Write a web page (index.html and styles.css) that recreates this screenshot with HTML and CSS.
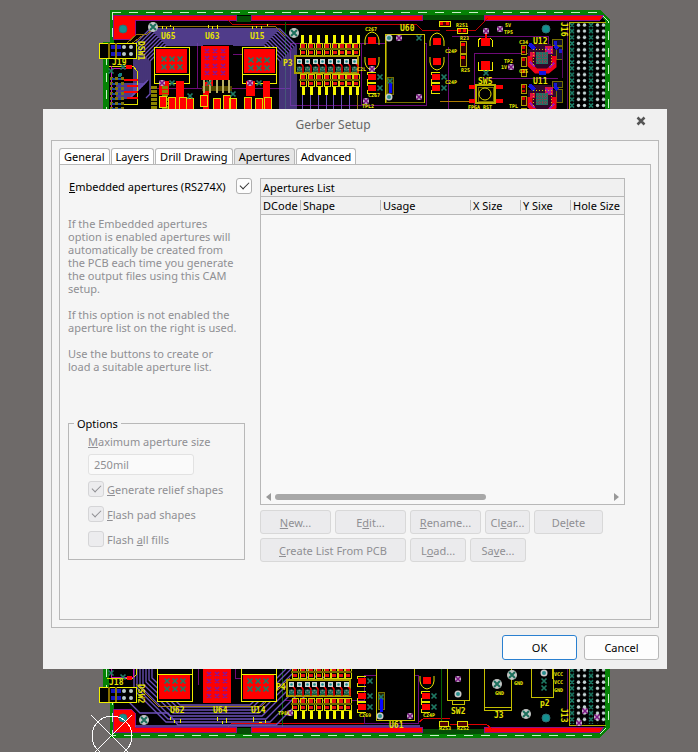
FILE: index.html
```html
<!DOCTYPE html>
<html lang="en">
<head>
<meta charset="utf-8">
<meta name="viewport" content="width=device-width, initial-scale=1">
<title>Gerber Setup</title>
<link rel="stylesheet" href="styles.css">
</head>
<body>
<svg class="board" viewBox="0 0 698 752" width="698" height="752" shape-rendering="crispEdges" aria-hidden="true">
  <defs>
    <pattern id="holes" x="569" y="22" width="38" height="12.4" patternUnits="userSpaceOnUse">
      <path d="M1 1l4 4M5 1l-4 4M1 7l4 4M5 7l-4 4M20 1l4 4M24 1l-4 4M20 7l4 4M24 7l-4 4" stroke="#1b8069" stroke-width="1.6" shape-rendering="auto"/>
      <g fill="#c4d4d4" shape-rendering="auto">
        <circle cx="9.500" cy="3" r="1.700"/><circle cx="15.500" cy="3" r="1.700"/><circle cx="9.500" cy="9" r="1.700"/><circle cx="15.500" cy="9" r="1.700"/>
        <circle cx="28.500" cy="3" r="1.700"/><circle cx="34.500" cy="3" r="1.700"/><circle cx="28.500" cy="9" r="1.700"/><circle cx="34.500" cy="9" r="1.700"/>
      </g>
    </pattern>
    <g id="via"><circle r="5" fill="#c3c7c5" shape-rendering="auto"/><path d="M-3-3L3 3M3-3L-3 3" stroke="#1b6f5c" stroke-width="2" shape-rendering="auto"/></g>
    <g id="pin" shape-rendering="auto"><circle r="3.500" fill="#c9c9c9"/><circle r="2" fill="#2a8f8f"/></g>
    <g id="xt"><path d="M-2.500-2.500L2.500 2.500M2.500-2.500L-2.500 2.500" stroke="#1f7a64" stroke-width="1.700" shape-rendering="auto"/></g>
    <g id="xp" shape-rendering="auto"><circle r="3" fill="#c9b6cc"/><path d="M-2.500-2.500L2.500 2.500M2.500-2.500L-2.500 2.500" stroke="#7c1584" stroke-width="1.500"/></g>
    <g id="x6">
      <use href="#xt" x="8" y="10"/><use href="#xt" x="16" y="10"/><use href="#xt" x="24" y="10"/>
      <use href="#xt" x="8" y="18"/><use href="#xt" x="16" y="18"/><use href="#xt" x="24" y="18"/>
    </g>
    <g id="x12" stroke="#86159a" stroke-width="1.700" fill="none" shape-rendering="auto">
      <path id="x3" d="M4 4l4 4m0-4l-4 4M12 4l4 4m0-4l-4 4M20 4l4 4m0-4l-4 4"/>
      <use href="#x3" y="7"/><use href="#x3" y="15"/><use href="#x3" y="22"/>
    </g>
    <g id="conn" shape-rendering="auto">
      <path d="M4 5l4 5v7" stroke="#e00" stroke-width="1.500" fill="none"/>
      <rect x="2" y="3" width="5" height="5" fill="#d0d6d4"/><circle cx="4.500" cy="5.500" r="1.300" fill="#168a8a"/>
      <circle cx="4.500" cy="13" r="2.500" fill="#78897f"/><path d="M2 11l5 5m0-5l-5 5" stroke="#156a53" stroke-width="1.500"/>
    </g>
    <g id="res">
      <path d="M1 0h6v12H1z" stroke="#d8d800" fill="#000"/><path d="M2 1h4v4H2zM2 8h4v3H2z" fill="#e01010"/><path d="M0 6h8" stroke="#6c6600" stroke-width="2"/>
    </g>
    <g id="cap"><path d="M-5-3H3V3H-5z" fill="#f00"/><path d="M-6-2v-3H3M-6 2v3H3" stroke="#e6e600" fill="none"/><use href="#xt" x="7" y="0"/></g>
    <g id="capv"><path d="M-4-3H4V4H-4z" fill="#f00"/><path d="M-7 5V0Q-6-7 0-8Q6-7 7 0V5" stroke="#e6e600" fill="none" shape-rendering="auto"/></g>
    <g id="qfn">
      <path d="M-9-14H9V-9H14V9H9V14H-9V9H-14V-9H-9z" fill="#30082a"/>
      <path d="M-12-2V7L-6 13H6L12 8V-2" fill="none" stroke="#f00018" stroke-width="5" shape-rendering="auto"/>
      <path d="M3-12h8v8H3zM-12-6h5v5h-5z" fill="#e01040"/>
      <path d="M4-10l6 6M10-10l-6 6M-12 4l5 5M7 10l5-5" stroke="#a014a8" stroke-width="2"/>
      <path d="M-13-14l6 5M-3 15h7M13-12l3 3" stroke="#1212e0" stroke-width="4"/>
      <path d="M-6-6H6V6H-6z" fill="#266f63"/><path d="M-6-3H6M-6 0H6M-6 3H6M-3-6V6M0-6V6M3-6V6" stroke="#8d3a4d" stroke-dasharray="1 1"/>
      <path d="M-9-9V9M9-9V9M-9-9H9" stroke="#d4c400" stroke-dasharray="1 2"/>
    </g>
    <g id="sideparts">
      <path d="M0 0h5v9H0zM0 12h5v9H0zM0 24h5v7H0z" fill="#280000" stroke="#a8a000"/>
      <path d="M1 1h3v3H1zM1 6h3v2H1zM1 13h3v3H1zM1 25h3v3H1z" fill="#d10000"/>
    </g>
    <g id="header">
      <path d="M0 0h37v15H0z" fill="#000" stroke="#f0f000"/>
      <path d="M12 2h4v4h-4zM18 2h4v4h-4zM12 9h4v4h-4zM18 9h4v4h-4z" fill="#1515c0"/>
      <path d="M10 0v15M17 0v15" stroke="#877000" stroke-width="2"/>
      <g fill="#b9c9c9" shape-rendering="auto"><circle cx="25" cy="4" r="2"/><circle cx="32" cy="4" r="2"/><circle cx="25" cy="11" r="2"/><circle cx="32" cy="11" r="2"/></g>
    </g>
  </defs>

  <!-- board outline -->
  <path d="M110 10H600L610 20V727L600 738H110V703H103V42H110z" fill="#058105"/>
  <path d="M114 15H599L605 21V726L599 733H114V699H109V46H114z" fill="#000"/>
  <path d="M112 12H599L608 21V726L599 735H112V701H106V44H112z" fill="none" stroke="#c8f0c8" stroke-dasharray="9 8"/>

  <!-- upper power planes and traces -->
  <path d="M236 16h15v6h-15zM422 15h62v5h-62z" fill="#064d06"/>
  <path d="M113 15H236V20H135V36L132 39H113zM251 15H422V20H251zM484 15H604L600 20H484z" fill="#f00" stroke="#8a0f8a"/>
  <path d="M228 20l4 4H416l6 6h18M488 18l-12 12h-30" fill="none" stroke="#c00000"/>
  <path d="M197 43v45M290 43v62M474 53v56M448 47v62M361 43h65v62h-65zM231 54h18M290 43h71M452 36h96v10M474 53h55M484 78h74M150 88h140M290 105h136" fill="none" stroke="#6d0b78"/>
  <path d="M285 22v87" stroke="#056305"/>
  <g fill="none" stroke="#6b50b8" shape-rendering="auto" stroke-width="1.300">
    <path d="M116 98H130L134 94V45L150 29H280L296 45V109"/>
    <path d="M116 96H132L136 92V47L152 31H278L294 47V109"/>
    <path d="M116 94H134L138 90V49L154 33H276L292 49V109"/>
    <path d="M116 92H136L140 88V51L156 35H274L290 51V109"/>
    <path d="M116 90H138L142 86V53L158 37H272L288 53V109"/>
    <path d="M116 88H140L144 84V55L160 39H270L286 55V109"/>
    <path d="M116 86H142L146 82V57L162 41H268L284 57V109"/>
    <path d="M116 84H144L148 80V59L164 43H266L282 59V109"/>
    <path d="M146 98L150 94V61L166 45H264L280 61V109"/>
  </g>
  <path d="M302 92v17M310 92v17M318 92v17M326 92v17M333 92v17M341 92v17M349 92v17" stroke="#6b50b8"/>
  <path d="M127 43l10-9h10l10-8h118l10 10M357 90v19M130 45l13-10" fill="none" stroke="#93750c"/>
  <path d="M203 45h30v35h-30z" fill="#000"/>

  <!-- lower power planes and traces -->
  <path d="M236 728h15v6h-15zM422 729h62v5h-62z" fill="#064d06"/>
  <path d="M113 709H131L135 713V727H236V732H113zM251 727H422V732H251zM484 727H604L600 732H484z" fill="#f00" stroke="#8a0f8a"/>
  <path d="M228 727l4-4H418l6-5h26M450 724h36l6 5" fill="none" stroke="#e00000"/>
  <path d="M198 669v16M235 669v9h20M364 717v6h54V675h-54v25h-80" fill="none" stroke="#6d0b78"/>
  <path d="M282 669v58M441 669v60M615 669" stroke="#056305"/>
  <g fill="none" stroke="#6b50b8" shape-rendering="auto" stroke-width="1.300">
    <path d="M128 701l12 12h28l10 12H276L340 661"/>
    <path d="M134 669V690L166 722H270L323 669"/>
    <path d="M137 669V688L168 719H266L316 669"/>
    <path d="M140 669V686L170 716H262L309 669"/>
    <path d="M143 669V684L173 713H259L303 669"/>
    <path d="M146 669V682L175 710H256L297 669"/>
    <path d="M149 669V680L177 707H253L291 669"/>
    <path d="M152 669V678L180 705H250L286 669"/>
    <path d="M135 726H420"/>
  </g>
  <path d="M136 684l22 22H262L290 678" fill="none" stroke="#a87f14"/>

  <!-- upper regulators -->
  <path d="M154 47h35v36h-35zM242 47h34v36h-34z" fill="#000" stroke="#f0f000"/>
  <path d="M154 74h35M242 74h34" stroke="#f0f000"/>
  <path d="M156 49h31v24h-31zM201 46h28v34h-28zM244 49h31v24h-31z" fill="#f00"/>
  <use href="#x6" x="156" y="49"/><use href="#x6" x="243" y="50"/><use href="#x12" x="201" y="45"/>
  <path d="M159 81h10v14h-10zM176 81h8v28h-8zM203 82h6v27h-6zM210 80h3v6h-3zM246 81h9v15h-9zM263 81h7v28h-7z" fill="#f00"/>
  <path d="M202 86h30v5h-30z" fill="#524700"/><path d="M204 80v13M210 80v13M217 80v13M223 80v13M229 80v13" stroke="#b9b060" stroke-width="2"/>
  <path d="M154 86v23M165 86v23" stroke="#8b8300" stroke-width="6" stroke-dasharray="3 1"/>
  <path d="M159 96h7v11h-7zM168 97h7v12h-7zM179 97h7v12h-7zM186 98h7v11h-7zM200 95h7v11h-7zM213 98h7v11h-7zM223 95h7v14h-7zM229 98h7v11h-7zM244 97h7v12h-7zM255 98h7v11h-7zM264 97h7v12h-7z" fill="#f00" stroke="#dcdc00"/>
  <use href="#xp" x="162" y="83"/><use href="#xt" x="172" y="83"/><use href="#xp" x="250" y="83"/><use href="#xt" x="259" y="83"/><use href="#xt" x="209" y="83"/><use href="#xt" x="190" y="96"/><use href="#xt" x="233" y="94"/>

  <!-- left connectors -->
  <use href="#header" x="99" y="43"/>
  <use href="#header" x="99" y="687"/>
  <path d="M109 66h24l4 5v33h-24" fill="none" stroke="#e0e000"/><path d="M111 66v43M112 68h19" stroke="#c216b4"/>
  <path d="M111 77v32M116 77v32M122 77v32" stroke="#80770c" stroke-width="3" stroke-dasharray="3 2"/>
  <path d="M113 78v31M119 78v31" stroke="#1647a8" stroke-width="3" stroke-dasharray="2 3"/>
  <path d="M124 80h14M127 86h11M124 92h14M127 98h11" stroke="#f00" stroke-width="2"/>
  <use href="#xt" x="111" y="71"/><use href="#xt" x="123" y="67"/><circle cx="120" cy="75" r="2" fill="#148080"/>
  <path d="M126 65h6v4h-6z" fill="#f00"/>
  <path d="M107 678h26l3-3v-6" fill="none" stroke="#e0e000"/><path d="M111 669v8h22v-8" stroke="#c216b4" fill="none"/><path d="M127 676h5v4h-5z" fill="#f00"/><use href="#xt" x="123" y="677"/><use href="#xt" x="111" y="673"/>

  <!-- P3 block -->
  <path d="M302 35v8M310 35v8M318 35v8M326 35v8M334 35v8M342 35v8M350 35v8M358 35v8" stroke="#f5f500" stroke-width="3"/>
  <g id="rrow">
    <use href="#res" x="299" y="43"/><use href="#res" x="307" y="43"/><use href="#res" x="315" y="43"/><use href="#res" x="323" y="43"/>
    <use href="#res" x="331" y="43"/><use href="#res" x="338" y="43"/><use href="#res" x="345" y="43"/><use href="#res" x="352" y="43"/>
  </g>
  <use href="#rrow" y="31"/>
  <path d="M295 56h63v17h-63z" fill="#000" stroke="#aaa000" stroke-width="2"/>
  <g id="pins">
    <use href="#conn" x="295" y="56"/><use href="#conn" x="303" y="56"/><use href="#conn" x="311" y="56"/><use href="#conn" x="318" y="56"/>
    <use href="#conn" x="326" y="56"/><use href="#conn" x="334" y="56"/><use href="#conn" x="342" y="56"/><use href="#conn" x="350" y="56"/>
  </g>
  <path d="M303 87v8M311 87v8M319 87v8M326 87v8M334 87v8M342 87v8M350 87v8M357 87v8" stroke="#f5f500" stroke-width="3"/>
  <use href="#via" x="294" y="33"/><use href="#via" x="153" y="27"/>

  <!-- P4 block -->
  <use href="#rrow" x="-8" y="623"/>
  <path d="M287 680h63v16h-63z" fill="#000" stroke="#aaa000" stroke-width="2"/>
  <use href="#pins" x="-8" y="623"/>
  <use href="#rrow" x="-8" y="655"/>
  <path d="M295 711v8M303 711v8M311 711v8M319 711v8M327 711v8M334 711v8M342 711v8M350 711v8" stroke="#f5f500" stroke-width="3"/>
  <use href="#xp" x="290" y="713"/>

  <!-- U60 / U61 area -->
  <path d="M385 34h39v68h-39z" fill="#000" stroke="#c9c400" stroke-width="1"/><path d="M386 35v67h38" fill="none" stroke="#777000"/>
  <path d="M376 669v51h38v-51" fill="#000" stroke="#c9c400"/>
  <path d="M387 77h6v17h-6zM378 692h6v17h-6z" fill="#282400" stroke="#777000"/><path d="M390 83v10M381 698v14" stroke="#0808ff" stroke-width="3"/><use href="#xt" x="390" y="81"/><use href="#xt" x="381" y="697"/>
  <use href="#pin" x="389" y="38"/><use href="#xp" x="399" y="38"/><use href="#xp" x="419" y="97"/><use href="#xt" x="419" y="38"/><use href="#pin" x="389" y="97"/><use href="#pin" x="380" y="716"/><use href="#xp" x="410" y="716"/>
  <use href="#capv" x="372" y="40"/><use href="#capv" transform="translate(372 62) scale(1 -1)"/><use href="#cap" x="373" y="77"/><use href="#cap" x="373" y="88"/>
  <use href="#capv" x="437" y="41"/><use href="#capv" transform="translate(437 62) scale(1 -1)"/><use href="#cap" x="437" y="77"/><use href="#cap" x="437" y="88"/>
  <use href="#cap" x="363" y="681"/><use href="#cap" x="363" y="696"/><use href="#cap" x="363" y="707"/>
  <use href="#capv" transform="translate(427 681) scale(1 -1)"/><use href="#cap" x="427" y="696"/><use href="#cap" x="427" y="707"/>
  <use href="#xp" x="366" y="101"/><use href="#xp" x="372" y="69"/>
  <path d="M439 21h11v5h-11zM457 28h10v5h-10zM439 721h9v5h-9zM457 721h10v5h-10z" fill="#500000" stroke="#e0e000"/>
  <path d="M440 22h3v3h-3zM446 22h3v3h-3zM458 29h3v3h-3zM463 29h3v3h-3z" fill="#f00"/>

  <!-- switches and right-hand parts -->
  <path d="M460 41h6v12h-6zM460 54h6v12h-6z" fill="#280000" stroke="#b0a800"/><path d="M461 43h4v3h-4zM461 56h4v3h-4z" fill="#f00"/>
  <path d="M481 38h9v8h-9zM481 61h9v9h-9zM485 29v9h2v-9z" fill="#f00"/><path d="M478 47v-7l3-2M492 47v-7l-2-2M478 62v8h14v-8" fill="none" stroke="#f0f000"/>
  <use href="#xp" x="486" y="31"/><use href="#xt" x="486" y="73"/><use href="#xp" x="500" y="29"/><use href="#xp" x="511" y="67"/>
  <path d="M469 85h6v4h-6zM496 85h7v4h-7zM469 99h6v4h-6zM496 99h7v4h-7z" fill="#f00"/>
  <path d="M476 85h19v18h-19z" fill="#000" stroke="#b8b000" stroke-width="2"/><path d="M478 87h15v14h-15z" fill="none" stroke="#777000"/><circle cx="485" cy="94" r="6" fill="none" stroke="#e3df00" shape-rendering="auto"/>
  <path d="M440 101h30" stroke="#ac7b00"/>
  <use href="#sideparts" x="521" y="45"/><use href="#sideparts" x="521" y="84"/>
  <path d="M552 39h10v6h-10zM552 81h10v6h-10zM556 46h6v13h-6zM556 89h6v13h-6z" fill="#10102c" stroke="#756e00"/>
  <path d="M554 41h3v4h-3zM559 49h3v4h-3zM554 83h3v4h-3z" fill="#1919d0"/>
  <use href="#qfn" x="542" y="58"/><use href="#qfn" x="542" y="99"/>
  <g fill="#139090" stroke="#306e70" shape-rendering="auto"><circle cx="123" cy="29" r="4"/><circle cx="546" cy="29" r="4"/><circle cx="123" cy="718" r="4"/><circle cx="546" cy="718" r="4"/></g>
  <path d="M447 669v31h22v-31M484 669v41h27v-41M531 669v28h22v-28M552 669v10M484 707h27M452 700v4h12v-4" fill="none" stroke="#c5bf00"/>
  <use href="#xp" x="458" y="679"/><use href="#pin" x="458" y="694"/><use href="#via" x="497" y="684"/><use href="#via" x="512" y="675"/>
  <use href="#pin" x="544" y="673"/><use href="#xt" x="544" y="681"/><use href="#xt" x="544" y="688"/><use href="#via" x="526" y="714"/><use href="#via" x="144" y="720"/>

  <path d="M569 22h37v702h-37z" fill="url(#holes)"/><path d="M606 22h-37v703h37" fill="none" stroke="#b0aa00"/>
  <path d="M562 50v28M567 22v90M567 669v50" stroke="#5b0a60"/>
  <use href="#xp" x="585" y="711"/><use href="#xp" x="597" y="717"/><use href="#xp" x="579" y="723"/>

  <!-- lower regulators -->
  <path d="M157 665h35v36h-35zM241 665h35v36h-35z" fill="#000" stroke="#f0f000"/><path d="M157 674h35M241 674h35" stroke="#f0f000"/>
  <path d="M159 675h31v24h-31zM203 665h28v38h-28zM243 675h31v24h-31z" fill="#f00"/>
  <use href="#x6" x="159" y="671"/><use href="#x6" x="242" y="671"/><use href="#x12" x="203" y="668"/>

  <!-- silkscreen -->
  <g class="silk">
    <text x="161" y="39">U65</text><text x="205" y="39">U63</text><text x="250" y="39">U15</text>
    <text x="400" y="31">U60</text><text x="283" y="66">P3</text><text x="112" y="65">J19</text>
    <text x="478" y="84">SW5</text><text x="533" y="44">U12</text><text x="533" y="84">U11</text>
    <text x="170" y="713">U62</text><text x="213" y="713">U64</text><text x="251" y="713">U14</text>
    <text x="276" y="690">P4</text><text x="109" y="685">J18</text><text x="389" y="728">U61</text>
    <text x="451" y="714">SW2</text><text x="494" y="718">J3</text><text x="540" y="706">p2</text>
    <text transform="translate(138 41) rotate(90)">DSW1</text><text transform="translate(138 684) rotate(90)">DSW2</text>
    <text transform="translate(561 22) rotate(90)">J16</text><text transform="translate(561 708) rotate(90)">J13</text>
  </g>
  <g class="silk-small">
    <text x="365" y="31">C267</text><text x="445" y="53">C24P</text><text x="445" y="84">C24P</text><text x="368" y="97">C267</text>
    <text x="505" y="27">5V</text><text x="504" y="34">TP5</text><text x="504" y="63">TP2</text><text x="501" y="69">1V</text><text x="362" y="108">TPL2</text>
    <text x="468" y="109">FPGA RST</text><text x="509" y="108">TPL</text><text x="456" y="27">R251</text><text x="460" y="40">R23</text><text x="461" y="72">R25</text>
    <text x="519" y="44">C34</text><text x="519" y="73">C35</text><text x="357" y="71">C2L</text>
    <text x="278" y="715">TP81</text><text x="359" y="717">C269</text><text x="423" y="717">C24P</text>
    <text x="439" y="730">R253</text><text x="457" y="730">R252</text><text x="554" y="676">VCC</text><text x="554" y="684">VCC</text><text x="554" y="692">GND</text>
    <text x="514" y="685">GND</text><text x="495" y="695">GND</text>
  </g>
  <path d="M162 26v3m4-2v2m4-4v2m3 0v3M208 25v3m4 1v-3m5-1v4M252 26v3m4-3v2m5-2v3m6-5v2M170 717v3m4 0v3m6-4v4M217 717v4m5 0v3m4-6v5M253 717v5m6 0h3m3-2v3" stroke="#f0f000" fill="none"/>

  <!-- origin marker -->
  <g fill="none" stroke="#fff"><circle cx="112" cy="736" r="20"/><path d="M91 715l41 41M132 715l-41 41"/></g>
</svg>

<main class="workspace">
  <form class="dialog" role="dialog" aria-labelledby="title">
    <header class="titlebar">
      <h1 id="title">Gerber Setup</h1>
      <button type="button" class="close" aria-label="Close">
        <svg viewBox="0 0 10 10" width="10" height="10"><path d="M1.500 1.500l7 7M8.500 1.500l-7 7" stroke="#555" stroke-width="2.500"/></svg>
      </button>
    </header>

    <div class="frame">
      <div class="tabs" role="tablist">
        <button type="button" role="tab" class="tab">General</button>
        <button type="button" role="tab" class="tab">Layers</button>
        <button type="button" role="tab" class="tab">Drill Drawing</button>
        <button type="button" role="tab" class="tab selected" aria-selected="true">Apertures</button>
        <button type="button" role="tab" class="tab">Advanced</button>
      </div>

      <section class="page" role="tabpanel">
        <div class="side">
          <div class="embedded">
            <label for="embedded"><u>E</u>mbedded apertures (RS274X)</label>
            <input type="checkbox" id="embedded" checked>
          </div>
          <div class="help">
            <p>If the Embedded apertures<br>option is enabled apertures will<br>automatically be created from<br>the PCB each time you generate<br>the output files using this CAM<br>setup.</p>
            <p>If this option is not enabled the<br>aperture list on the right is used.</p>
            <p>Use the buttons to create or<br>load a suitable aperture list.</p>
          </div>
          <fieldset class="options">
            <legend>Options</legend>
            <label for="maxsize"><u>M</u>aximum aperture size</label>
            <input type="text" id="maxsize" value="250mil" disabled>
            <div class="check"><input type="checkbox" id="relief" checked disabled><label for="relief"><u>G</u>enerate relief shapes</label></div>
            <div class="check"><input type="checkbox" id="pads" checked disabled><label for="pads"><u>F</u>lash pad shapes</label></div>
            <div class="check"><input type="checkbox" id="fills" disabled><label for="fills">Flash <u>a</u>ll fills</label></div>
          </fieldset>
        </div>

        <div class="content">
          <div class="list">
            <table>
              <caption>Apertures List</caption>
              <colgroup><col class="c-code"><col class="c-shape"><col class="c-usage"><col class="c-size"><col class="c-size"><col></colgroup>
              <thead><tr><th><span>DCode</span></th><th><span>Shape</span></th><th><span>Usage</span></th><th><span>X Size</span></th><th><span>Y Sixe</span></th><th><span>Hole Size</span></th></tr></thead>
            </table>
            <div class="scroll" aria-hidden="true">
              <svg viewBox="0 0 5 8" width="5" height="8"><path d="M5 0v8L0 4z"/></svg>
              <div class="track"><div class="thumb"></div></div>
              <svg viewBox="0 0 5 8" width="5" height="8"><path d="M0 0v8l5-4z"/></svg>
            </div>
          </div>
          <div class="row">
            <button type="button" class="btn medium" disabled><u>N</u>ew...</button>
            <button type="button" class="btn medium" disabled>E<u>d</u>it...</button>
            <button type="button" class="btn medium" disabled><u>R</u>ename...</button>
            <button type="button" class="btn tiny" disabled>Cl<u>e</u>ar...</button>
            <button type="button" class="btn delete" disabled>De<u>l</u>ete</button>
          </div>
          <div class="row">
            <button type="button" class="btn wide" disabled><u>C</u>reate List From PCB</button>
            <button type="button" class="btn small" disabled>L<u>o</u>ad...</button>
            <button type="button" class="btn small" disabled>Sa<u>v</u>e...</button>
          </div>
        </div>
      </section>
    </div>

    <footer class="actions">
      <button type="submit" class="btn action primary">OK</button>
      <button type="button" class="btn action">Cancel</button>
    </footer>
  </form>
</main>
</body>
</html>
```
FILE: styles.css
```css
* {
  box-sizing: border-box;
}

body {
  position: relative;
  margin: 0;
  min-height: 100vh;
  overflow: hidden;
  background: #6e6a69;
  color: #000;
  font: 11px/13px "Noto Sans", "Open Sans", sans-serif;
}

button,
input {
  font: inherit;
  color: inherit;
}

.board {
  position: absolute;
  top: 0;
  left: 0;
}

.silk {
  fill: #e6e300;
  font: bold 8px "DejaVu Sans Mono", monospace;
}

.silk-small {
  fill: #f0ee00;
  font: bold 5px "DejaVu Sans Mono", monospace;
}

.workspace {
  position: relative;
  padding: 109px 31px 83px 43px;
}

.dialog {
  padding: 0 8px 9px;
  background: #f0f0f0;
}

.titlebar {
  display: grid;
  grid-template-columns: 1fr auto 1fr;
  height: 31px;
}

.titlebar h1 {
  grid-column: 2;
  margin: 0 44px 0 0;
  padding-top: 8px;
  color: #666;
  font-size: 12px;
  font-weight: 400;
  line-height: 16px;
}

.close {
  justify-self: end;
  align-self: start;
  margin: 7px 13px 0 0;
  padding: 0;
  border: 0;
  background: none;
}

.close svg {
  display: block;
}

.frame {
  padding: 7px;
  border: 1px solid #b8b8b8;
  background: #f5f5f5;
}

.tabs {
  display: flex;
  gap: 1px;
  height: 16px;
}

.tab {
  padding: 0 4px;
  border: 1px solid #b8b8b8;
  border-bottom: 0;
  border-radius: 3px 3px 0 0;
  background: #fff;
  line-height: 14px;
}

.tab.selected {
  background: #e6e6e6;
}

.page {
  display: flex;
  align-items: flex-start;
  gap: 15px;
  padding: 13px 25px 57px 8px;
  border: 1px solid #b8b8b8;
}

.side {
  flex: none;
  width: 177px;
}

.embedded {
  display: flex;
  justify-content: space-between;
  width: 184px;
  padding-left: 1px;
  line-height: 18px;
}

.help {
  margin-top: 21px;
  color: #8f8f93;
}

.help p {
  margin: 0 0 13px;
}

input[type="checkbox"] {
  appearance: none;
  display: grid;
  flex: none;
  place-items: center;
  width: 16px;
  height: 16px;
  margin: 0;
  border: 1px solid #b0b0b0;
  border-radius: 3px;
  background: #fdfdfd;
  color: #333;
}

input[type="checkbox"]:disabled {
  border-color: #d5d5d7;
  background: #ececee;
  color: #8f8f93;
}

input[type="checkbox"]:checked::before {
  content: "";
  width: 8px;
  height: 4px;
  margin-bottom: 3px;
  border: solid currentColor;
  border-width: 0 0 1px 1px;
  transform: rotate(-45deg);
}

.options {
  margin: 44px 0 0;
  padding: 5px 19px 12px;
  border: 1px solid #b8b8b8;
  color: #8f8f93;
}

.options legend {
  margin-left: -14px;
  padding: 0 3px;
  color: #000;
}

.options > label {
  display: block;
}

.options input[type="text"] {
  display: block;
  width: 106px;
  height: 21px;
  margin: 6px 0;
  padding: 0 5px;
  border: 1px solid #e2e2e2;
  border-radius: 3px;
  background: #fafafa;
}

.check {
  display: flex;
  gap: 3px;
  height: 16px;
  line-height: 18px;
}

.check + .check {
  margin-top: 9px;
}

.content {
  flex: 1;
  min-width: 0;
}

.list {
  display: flex;
  flex-direction: column;
  justify-content: space-between;
  height: 327px;
  margin-bottom: 5px;
  border: 1px solid #b8b8b8;
  background: #f8f8f8;
}

table {
  width: 100%;
  border-collapse: collapse;
  table-layout: fixed;
  background: #f0f0f0;
}

caption {
  height: 18px;
  padding-left: 2px;
  border-bottom: 1px solid #b8b8b8;
  background: #f0f0f0;
  line-height: 18px;
  text-align: left;
}

th {
  height: 17px;
  padding: 0;
  border-bottom: 1px solid #b8b8b8;
  font-weight: 400;
  text-align: left;
  white-space: nowrap;
}

th span {
  display: block;
  height: 11px;
  padding-left: 2px;
  line-height: 11px;
}

th + th span {
  border-left: 1px solid #b8b8b8;
}

.c-code { width: 39px; }
.c-shape { width: 80px; }
.c-usage { width: 90px; }
.c-size { width: 50px; }

.scroll {
  display: flex;
  align-items: center;
  gap: 4px;
  padding: 3px 5px;
  fill: #999;
}

.track {
  flex: 1;
}

.thumb {
  width: 63%;
  height: 6px;
  border-radius: 3px;
  background: #a8a8a8;
}

.row {
  display: flex;
  gap: 4px;
}

.row + .row {
  margin-top: 4px;
}

.btn {
  height: 24px;
  padding: 0;
  border: 1px solid #b8b8b8;
  border-radius: 3px;
  background: #fdfdfd;
}

.btn:disabled {
  border-color: #d8d8d8;
  background: #ebebed;
  color: #8f8f93;
}

.btn.tiny { width: 45px; }
.btn.small { width: 56px; }
.btn.delete { width: 69px; }
.btn.medium { width: 71px; }
.btn.wide { width: 146px; }

.actions {
  display: flex;
  justify-content: flex-end;
  gap: 7px;
  padding-top: 7px;
}

.btn.action {
  width: 75px;
  height: 25px;
}

.btn.primary {
  border-color: #2a80d0;
}
```
